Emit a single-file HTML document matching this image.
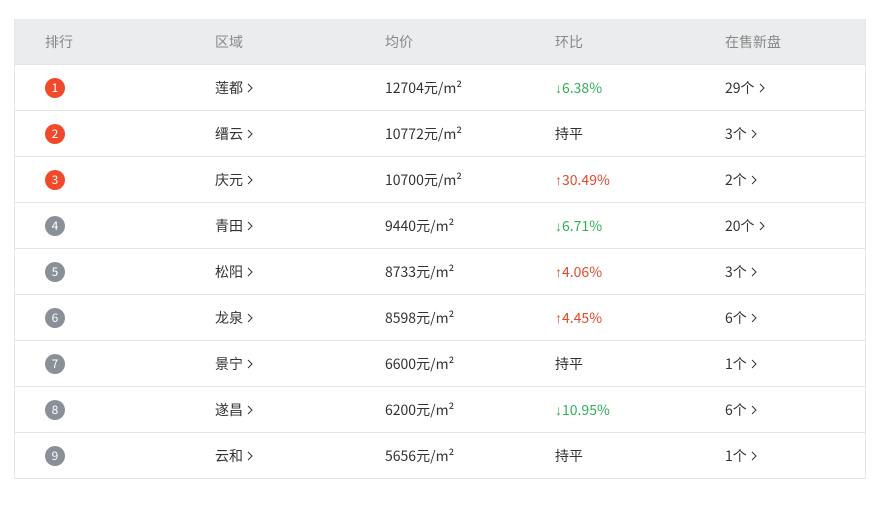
<!DOCTYPE html><html><head><meta charset="utf-8"><style>
body{margin:0;background:#fff;font-family:"Noto Sans CJK SC",sans-serif;}
.t{position:absolute;left:14px;top:19px;width:850px;border:1px solid #e6e6e6;border-top:none;}
.r{height:45px;border-bottom:1px solid #e6e6e6;display:flex;align-items:center;font-size:14px;color:#333;line-height:20px}
.r:last-child{border-bottom:none}
.h{background:#ebeced;color:#888;font-size:14px;height:45px}
.c{width:170px;padding-left:30px;box-sizing:border-box;display:flex;align-items:center}
.n{display:inline-block;width:20px;height:20px;border-radius:50%;color:#fff;text-align:center;line-height:20px;font-size:12px;background:#8a9097}
.n.a{background:#f04a2a}
.g{color:#2fb158}.d{color:#e9472b}
.ar{font-family:"Liberation Sans",sans-serif}
svg{margin-left:4px}
</style></head><body><div class="t">
<div class="r h"><div class="c">排行</div><div class="c">区域</div><div class="c">均价</div><div class="c">环比</div><div class="c">在售新盘</div></div>
<div class="r"><div class="c"><span class="n a">1</span></div><div class="c">莲都<svg width="6" height="10"><path d="M1 1l4 4-4 4" fill="none" stroke="#333"/></svg></div><div class="c">12704元/m²</div><div class="c g"><span class="ar">↓</span>6.38%</div><div class="c">29个<svg width="6" height="10"><path d="M1 1l4 4-4 4" fill="none" stroke="#333"/></svg></div></div>
<div class="r"><div class="c"><span class="n a">2</span></div><div class="c">缙云<svg width="6" height="10"><path d="M1 1l4 4-4 4" fill="none" stroke="#333"/></svg></div><div class="c">10772元/m²</div><div class="c">持平</div><div class="c">3个<svg width="6" height="10"><path d="M1 1l4 4-4 4" fill="none" stroke="#333"/></svg></div></div>
<div class="r"><div class="c"><span class="n a">3</span></div><div class="c">庆元<svg width="6" height="10"><path d="M1 1l4 4-4 4" fill="none" stroke="#333"/></svg></div><div class="c">10700元/m²</div><div class="c d"><span class="ar">↑</span>30.49%</div><div class="c">2个<svg width="6" height="10"><path d="M1 1l4 4-4 4" fill="none" stroke="#333"/></svg></div></div>
<div class="r"><div class="c"><span class="n">4</span></div><div class="c">青田<svg width="6" height="10"><path d="M1 1l4 4-4 4" fill="none" stroke="#333"/></svg></div><div class="c">9440元/m²</div><div class="c g"><span class="ar">↓</span>6.71%</div><div class="c">20个<svg width="6" height="10"><path d="M1 1l4 4-4 4" fill="none" stroke="#333"/></svg></div></div>
<div class="r"><div class="c"><span class="n">5</span></div><div class="c">松阳<svg width="6" height="10"><path d="M1 1l4 4-4 4" fill="none" stroke="#333"/></svg></div><div class="c">8733元/m²</div><div class="c d"><span class="ar">↑</span>4.06%</div><div class="c">3个<svg width="6" height="10"><path d="M1 1l4 4-4 4" fill="none" stroke="#333"/></svg></div></div>
<div class="r"><div class="c"><span class="n">6</span></div><div class="c">龙泉<svg width="6" height="10"><path d="M1 1l4 4-4 4" fill="none" stroke="#333"/></svg></div><div class="c">8598元/m²</div><div class="c d"><span class="ar">↑</span>4.45%</div><div class="c">6个<svg width="6" height="10"><path d="M1 1l4 4-4 4" fill="none" stroke="#333"/></svg></div></div>
<div class="r"><div class="c"><span class="n">7</span></div><div class="c">景宁<svg width="6" height="10"><path d="M1 1l4 4-4 4" fill="none" stroke="#333"/></svg></div><div class="c">6600元/m²</div><div class="c">持平</div><div class="c">1个<svg width="6" height="10"><path d="M1 1l4 4-4 4" fill="none" stroke="#333"/></svg></div></div>
<div class="r"><div class="c"><span class="n">8</span></div><div class="c">遂昌<svg width="6" height="10"><path d="M1 1l4 4-4 4" fill="none" stroke="#333"/></svg></div><div class="c">6200元/m²</div><div class="c g"><span class="ar">↓</span>10.95%</div><div class="c">6个<svg width="6" height="10"><path d="M1 1l4 4-4 4" fill="none" stroke="#333"/></svg></div></div>
<div class="r"><div class="c"><span class="n">9</span></div><div class="c">云和<svg width="6" height="10"><path d="M1 1l4 4-4 4" fill="none" stroke="#333"/></svg></div><div class="c">5656元/m²</div><div class="c">持平</div><div class="c">1个<svg width="6" height="10"><path d="M1 1l4 4-4 4" fill="none" stroke="#333"/></svg></div></div>
</div></body></html>
